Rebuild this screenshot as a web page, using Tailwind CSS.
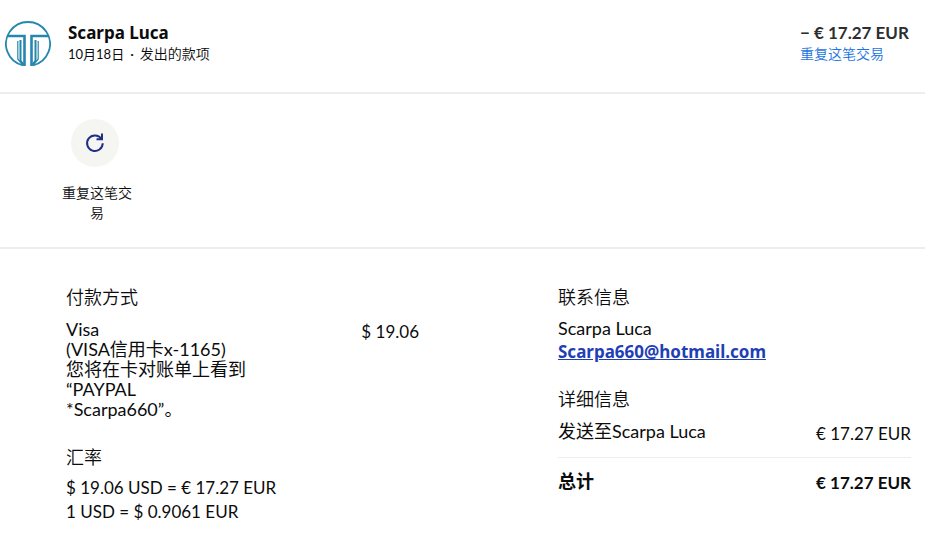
<!DOCTYPE html>
<html lang="zh-CN">
<head>
    <meta charset="UTF-8">
    <meta name="viewport" content="width=device-width, initial-scale=1.0">
    <title>交易详情</title>
    <script src="https://cdn.jsdelivr.net/npm/@tailwindcss/browser@4"></script>
</head>
<body class="bg-white text-[#0c0c0d] font-['Lato','Noto_Sans_CJK_SC',sans-serif]">

    <!-- Transaction header -->
    <header class="flex items-start border-b-2 border-[#ededed] pl-[5px] pr-3 pt-[21px] pb-[25px]">
        <svg class="size-[46px] shrink-0" viewBox="0 0 46 46" fill="none" stroke="#2587ad" role="img" aria-label="Scarpa Luca">
            <path d="M18 44.4A22 22 0 1 1 28 44.4" stroke-width="1.8" />
            <path d="M2 15H19.5V45" stroke-width="2.6" />
            <path d="M44 15H26.5V45" stroke-width="2.6" />
            <path d="M15.5 19V40L19 44M30.5 19V40L27 44" stroke-width="2" />
            <path d="M12.8 20V38L17 43M33.2 20V38L29 43" stroke-width="1.2" />
        </svg>
        <div class="ml-[17px] flex-1">
            <h1 class="text-[17px] leading-6 font-bold font-['Noto_Sans',sans-serif]">Scarpa Luca</h1>
            <p class="text-sm leading-[18px]"><span class="text-[13px]">10月18日</span><span class="mx-1.5">·</span><span class="font-[350]">发出的款项</span></p>
        </div>
        <div class="w-[113px] whitespace-nowrap">
            <p class="text-[17px] leading-6 font-bold text-[#2c2e2f]">− € 17.27 EUR</p>
            <a href="#" class="block text-sm leading-[18px] font-[350] text-[#1a73e0]">重复这笔交易</a>
        </div>
    </header>

    <!-- Actions -->
    <section class="border-b-2 border-[#ededed] pl-[59px] pt-[25px] pb-6">
        <button type="button" class="flex w-19 flex-col items-center text-sm leading-5 font-[350]">
            <span class="mb-4 mr-1 flex size-12 items-center justify-center rounded-full bg-[#f5f5f2]">
                <svg class="size-6" viewBox="0 0 24 24" fill="none" stroke="#1f2f86" stroke-width="2">
                    <path d="M19.7 12.2A7.8 7.8 0 1 1 18.4 7.9" />
                    <path d="M19 2.5V8.2H13.5" />
                </svg>
            </span>
            重复这笔交易
        </button>
    </section>

    <!-- Details -->
    <main class="grid grid-cols-[353fr_353fr] gap-x-[139px] pl-[66px] pr-[14px] pt-9 text-[18px] leading-6">
        <div>
            <h2 class="font-[350]">付款方式</h2>
            <div class="mt-[10px] flex justify-between">
                <p class="w-[186px] leading-5">Visa<br>(VISA信用卡x-1165)<br>您将在卡对账单上看到<br>“PAYPAL<br>*Scarpa660”。</p>
                <p class="text-[17px] leading-[26px]">$ 19.06</p>
            </div>
            <h2 class="mt-[26px] font-[350]">汇率</h2>
            <p class="mt-[7px] text-[17px]">$ 19.06 USD = € 17.27 EUR</p>
            <p class="text-[17px]">1 USD = $ 0.9061 EUR</p>
        </div>
        <div>
            <h2 class="font-[350]">联系信息</h2>
            <p class="mt-[7px]">Scarpa Luca</p>
            <a href="mailto:Scarpa660@hotmail.com" class="block text-[17px] font-bold text-[#1f3fb5] underline font-['Noto_Sans',sans-serif]">Scarpa660@hotmail.com</a>
            <h2 class="mt-[23px] font-[350]">详细信息</h2>
            <div class="mt-2 flex items-start justify-between border-b border-[#ededed] pb-2">
                <p>发送至Scarpa Luca</p>
                <p class="text-[17px] leading-[30px]">€ 17.27 EUR</p>
            </div>
            <div class="mt-[11px] flex items-start justify-between font-bold">
                <p>总计</p>
                <p class="text-[17px] leading-7">€ 17.27 EUR</p>
            </div>
        </div>
    </main>

</body>
</html>
